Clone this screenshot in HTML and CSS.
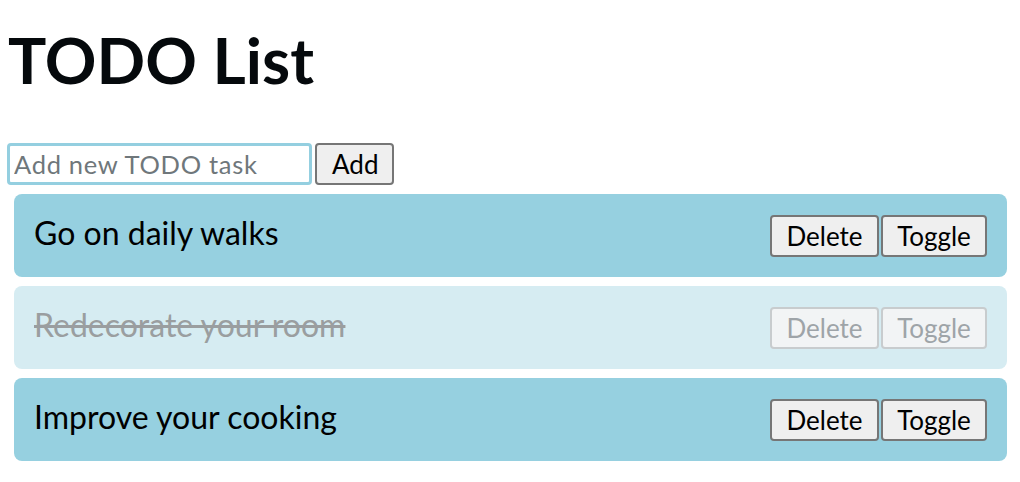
FILE: index.html
```html
<!DOCTYPE html>
<html>
<head>
<meta charset="utf-8">
<link rel="stylesheet" href="styles.css">
</head>
<body>
<div class="page">
  <h1 class="title">TODO List</h1>
  <form class="add-form">
    <input class="add-input" type="text" placeholder="Add new TODO task">
    <button class="btn add-btn" type="button">Add</button>
  </form>
  <ul class="todo-list">
    <li class="todo">
      <span class="todo-text">Go on daily walks</span>
      <div class="actions">
        <button class="btn" type="button">Delete</button>
        <button class="btn" type="button">Toggle</button>
      </div>
    </li>
    <li class="todo done">
      <span class="todo-text">Redecorate your room</span>
      <div class="actions">
        <button class="btn" type="button" disabled>Delete</button>
        <button class="btn" type="button" disabled>Toggle</button>
      </div>
    </li>
    <li class="todo">
      <span class="todo-text">Improve your cooking</span>
      <div class="actions">
        <button class="btn" type="button">Delete</button>
        <button class="btn" type="button">Toggle</button>
      </div>
    </li>
  </ul>
</div>
</body>
</html>
```
FILE: styles.css
```css
html, body {
  margin: 0;
  padding: 0;
  background: #ffffff;
}
body {
  font-family: Lato, "Liberation Sans", sans-serif;
  color: #000;
}
.page {
  padding: 8px;
  display: flex;
  flex-direction: column;
}
.title {
  font-size: 64px;
  font-weight: 700;
  line-height: 78px;
  margin: 13px 0 0 0;
  color: #05090c;
}
.add-form {
  display: flex;
  gap: 3px;
  margin: 44px 0 0 -1px;
}
.add-input {
  box-sizing: border-box;
  width: 305px;
  height: 42px;
  border: 3px solid #94cfe0;
  border-radius: 4px;
  padding: 0 4px;
  font-family: Lato, "Liberation Sans", sans-serif;
  font-size: 25.5px;
  letter-spacing: 0.7px;
  color: #000;
  outline: none;
}
.add-input::placeholder {
  color: #6f777b;
}
.btn {
  box-sizing: border-box;
  height: 42px;
  padding: 0 15px;
  border: 2px solid #767676;
  border-radius: 4px;
  background: #efefef;
  font-family: Lato, "Liberation Sans", sans-serif;
  font-size: 26px;
  color: #000;
}
.add-btn {
  width: 79px;
}
.todo-list {
  list-style: none;
  margin: 9px 5px 0 6px;
  padding: 0;
  display: flex;
  flex-direction: column;
  gap: 9px;
}
.todo {
  height: 83px;
  box-sizing: border-box;
  background: #96d0e0;
  border-radius: 8px;
  padding: 0 20px 0 20px;
  display: flex;
  align-items: center;
  justify-content: space-between;
}
.todo-text {
  font-size: 32px;
  line-height: 40px;
  padding-bottom: 6px;
}
.actions {
  display: flex;
  gap: 2px;
  padding-top: 1px;
}
.actions .btn {
  width: 109px;
  padding: 0;
}
.actions .btn + .btn {
  width: 106px;
}
.todo.done {
  background: #d6ecf2;
}
.todo.done .todo-text {
  color: #9a9ea0;
  text-decoration: line-through;
}
.btn:disabled {
  background: #f2f4f5;
  border: 2px solid #c8ccce;
  color: #9ea4a8;
}
```
